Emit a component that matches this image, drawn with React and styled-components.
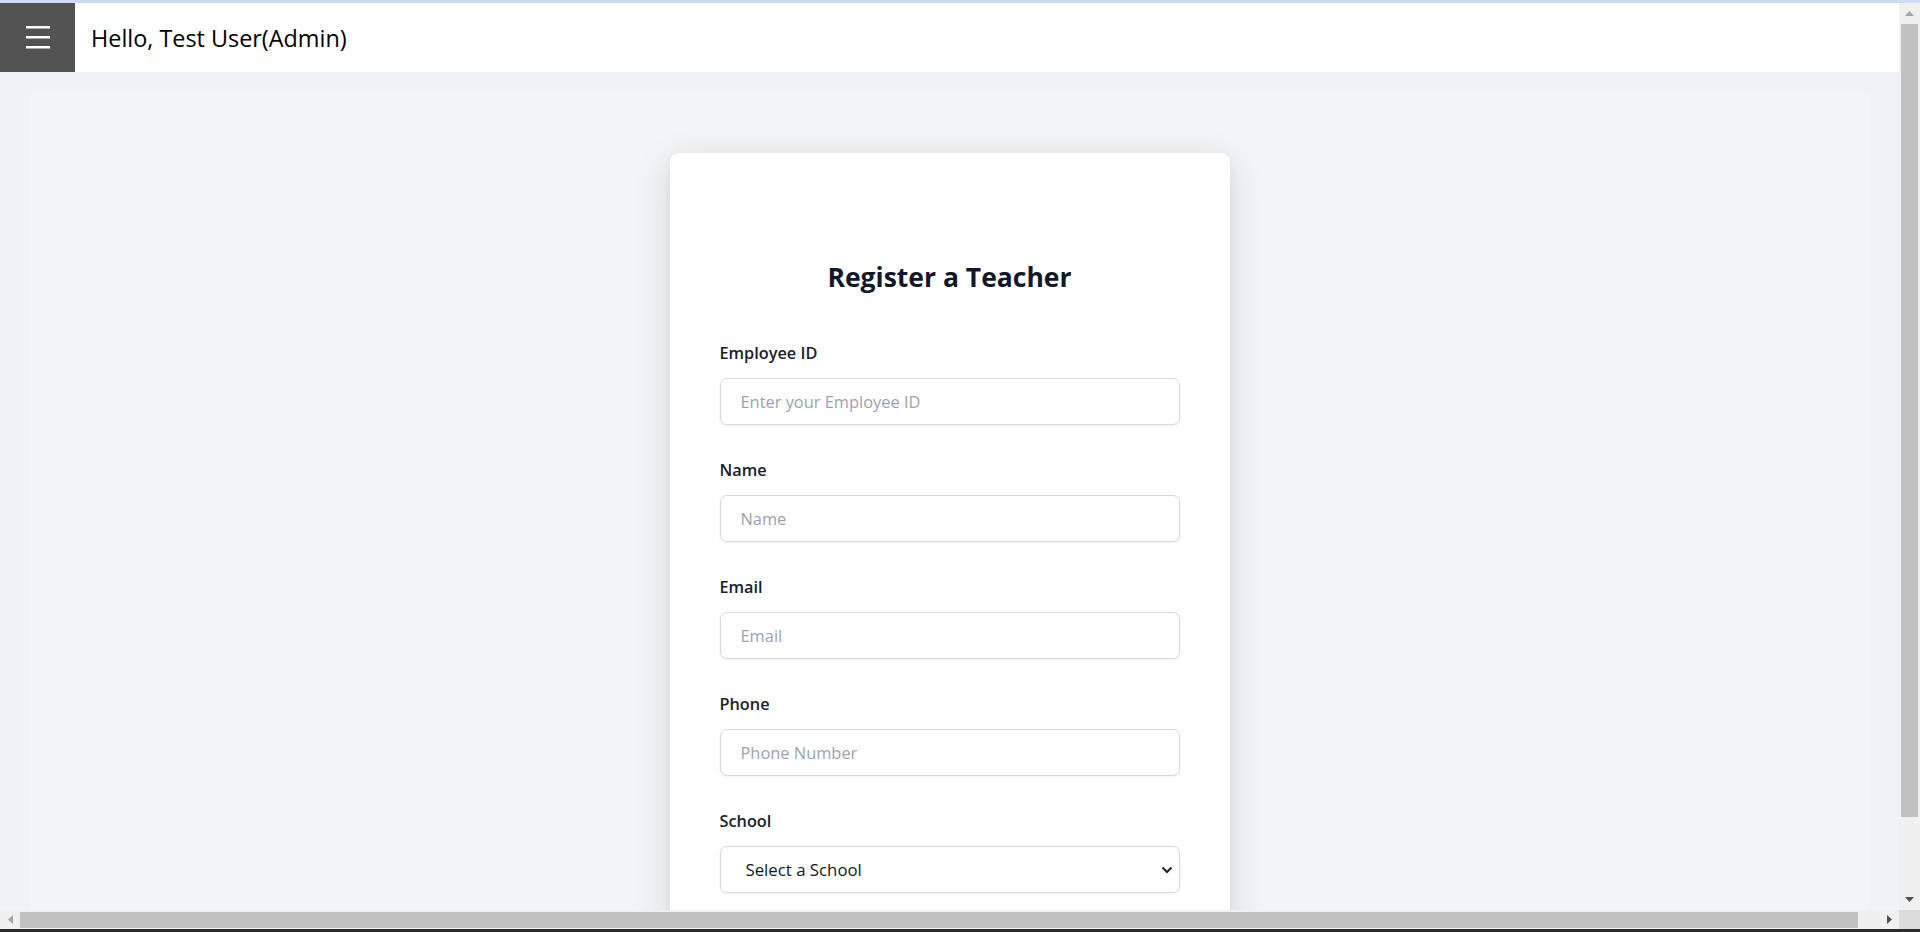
import styled, { createGlobalStyle } from "styled-components";

const GlobalStyle = createGlobalStyle`
  html, body {
    margin: 0;
    padding: 0;
    height: 100%;
    overflow: hidden;
  }
  body {
    font-family: "Segoe UI", "Open Sans", "Noto Sans", sans-serif;
  }
  * {
    box-sizing: border-box;
  }
`;

const Frame = styled.div`
  height: 100vh;
  display: flex;
  flex-direction: column;
`;

const TopStrip = styled.div`
  height: 3px;
  flex-shrink: 0;
  background: #cddcf6;
`;

const BottomStrip = styled.div`
  height: 3px;
  flex-shrink: 0;
  background: #2b2b2b;
`;

const Body = styled.div`
  flex: 1;
  min-height: 0;
  display: flex;
`;

const Viewport = styled.div`
  flex: 1;
  min-width: 0;
  overflow: hidden;
  background: #eff3f8;
`;

// window scrollbars, drawn as flow parts of the frame
const VBar = styled.div`
  width: 21px;
  flex-shrink: 0;
  display: flex;
  flex-direction: column;
  background: #f0f0f0;
`;

const HRow = styled.div`
  height: 19px;
  flex-shrink: 0;
  display: flex;
`;

const HBar = styled.div`
  flex: 1;
  display: flex;
  background: #f0f0f0;
`;

const Corner = styled.div`
  width: 21px;
  background: #dcdcdc;
`;

const ArrowButton = styled.div`
  flex-shrink: 0;
  width: ${(p) => (p.$vertical ? "21px" : "20px")};
  height: ${(p) => (p.$vertical ? "21px" : "19px")};
  display: flex;
  align-items: center;
  justify-content: center;
`;

const Track = styled.div`
  flex: 1;
  display: flex;
  flex-direction: ${(p) => (p.$vertical ? "column" : "row")};
`;

const Thumb = styled.div`
  flex-shrink: 0;
  background: #c1c1c1;
  ${(p) =>
    p.$vertical
      ? `height: ${p.$size}px; margin: 0 2px;`
      : `width: ${p.$size}px; margin: 2px 0 1px;`}
`;

const Arrow = ({ dir, color }) => {
  const shapes = {
    up: { w: 9, h: 5, pts: "4.5,0 9,5 0,5" },
    down: { w: 9, h: 5, pts: "0,0 9,0 4.5,5" },
    left: { w: 5, h: 9, pts: "5,0 5,9 0,4.5" },
    right: { w: 5, h: 9, pts: "0,0 5,4.5 0,9" },
  };
  const s = shapes[dir];
  return (
    <svg width={s.w} height={s.h} viewBox={`0 0 ${s.w} ${s.h}`}>
      <polygon points={s.pts} fill={color} />
    </svg>
  );
};

const Header = styled.header`
  width: 100vw;
  height: 69px;
  display: flex;
  align-items: center;
  background: #ffffff;
`;

const MenuButton = styled.button`
  width: 75px;
  height: 100%;
  border: none;
  padding: 0;
  display: flex;
  align-items: center;
  justify-content: center;
  background: #525252;
  cursor: pointer;
`;

const Greeting = styled.span`
  margin-left: 16px;
  font-size: 23.4px;
  color: #000000;
`;

const Main = styled.main`
  margin: 21px 30px 0;
  padding: 60px 0 47px;
  display: flex;
  justify-content: center;
  background: #f3f4f6;
`;

const Card = styled.div`
  width: 560px;
  padding: 106px 50px 50px;
  background: #ffffff;
  border-radius: 9px;
  box-shadow: 0 10px 40px rgba(0, 0, 0, 0.11), 0 4px 14px rgba(0, 0, 0, 0.05);
`;

const Title = styled.h2`
  margin: 0 0 46px;
  text-align: center;
  font-size: 26.5px;
  line-height: 36px;
  font-weight: 700;
  color: #111827;
`;

const Form = styled.form`
  display: flex;
  flex-direction: column;
  gap: 33px;
`;

const Field = styled.div`
  display: flex;
  flex-direction: column;
`;

const Label = styled.label`
  margin-bottom: 13px;
  font-size: 16.3px;
  line-height: 24px;
  font-weight: 600;
  color: #1a202c;
`;

const Input = styled.input`
  height: 47px;
  padding: 0 20px;
  border: 1px solid #d8dae0;
  border-radius: 7px;
  box-shadow: 0 1px 3px rgba(0, 0, 0, 0.07);
  font-family: inherit;
  font-size: 16.4px;
  color: #111827;
  outline: none;
  &::placeholder {
    color: #9ca3af;
  }
`;

const SelectWrap = styled.div`
  position: relative;
`;

const Select = styled.select`
  width: 100%;
  height: 47px;
  padding: 0 40px 0 25px;
  border: 1px solid #d8dae0;
  border-radius: 7px;
  box-shadow: 0 1px 3px rgba(0, 0, 0, 0.07);
  background: #ffffff;
  font-family: inherit;
  font-size: 16.8px;
  color: #111827;
  appearance: none;
  outline: none;
`;

const Chevron = styled.svg`
  position: absolute;
  right: 7px;
  top: 50%;
  transform: translateY(-50%);
  pointer-events: none;
`;

const fields = [
  { id: "employeeId", label: "Employee ID", placeholder: "Enter your Employee ID" },
  { id: "name", label: "Name", placeholder: "Name" },
  { id: "email", label: "Email", placeholder: "Email", type: "email" },
  { id: "phone", label: "Phone", placeholder: "Phone Number", type: "tel" },
];

const App = () => {
  return (
    <Frame>
      <GlobalStyle />
      <TopStrip />
      <Body>
        <Viewport>
          <Header>
            <MenuButton aria-label="Open menu">
              <svg width="24" height="23" viewBox="0 0 24 23">
                <rect x="0" y="0" width="24" height="2.5" fill="#fff" />
                <rect x="0" y="10" width="24" height="2.5" fill="#fff" />
                <rect x="0" y="20" width="24" height="2.5" fill="#fff" />
              </svg>
            </MenuButton>
            <Greeting>Hello, Test User(Admin)</Greeting>
          </Header>
          <Main>
            <Card>
              <Title>Register a Teacher</Title>
              <Form>
                {fields.map((f) => (
                  <Field key={f.id}>
                    <Label htmlFor={f.id}>{f.label}</Label>
                    <Input id={f.id} type={f.type || "text"} placeholder={f.placeholder} />
                  </Field>
                ))}
                <Field>
                  <Label htmlFor="school">School</Label>
                  <SelectWrap>
                    <Select id="school" defaultValue="">
                      <option value="">Select a School</option>
                    </Select>
                    <Chevron width="12" height="8" viewBox="0 0 12 8">
                      <path d="M1.5 1.5 L6 6 L10.5 1.5" fill="none" stroke="#1f2937" strokeWidth="2.2" />
                    </Chevron>
                  </SelectWrap>
                </Field>
              </Form>
            </Card>
          </Main>
        </Viewport>
        <VBar>
          <ArrowButton $vertical>
            <Arrow dir="up" color="#a3a3a3" />
          </ArrowButton>
          <Track $vertical>
            <Thumb $vertical $size={793} />
          </Track>
          <ArrowButton $vertical>
            <Arrow dir="down" color="#505050" />
          </ArrowButton>
        </VBar>
      </Body>
      <HRow>
        <HBar>
          <ArrowButton>
            <Arrow dir="left" color="#a3a3a3" />
          </ArrowButton>
          <Track>
            <Thumb $size={1838} />
          </Track>
          <ArrowButton>
            <Arrow dir="right" color="#505050" />
          </ArrowButton>
        </HBar>
        <Corner />
      </HRow>
      <BottomStrip />
    </Frame>
  );
};

export default App;
